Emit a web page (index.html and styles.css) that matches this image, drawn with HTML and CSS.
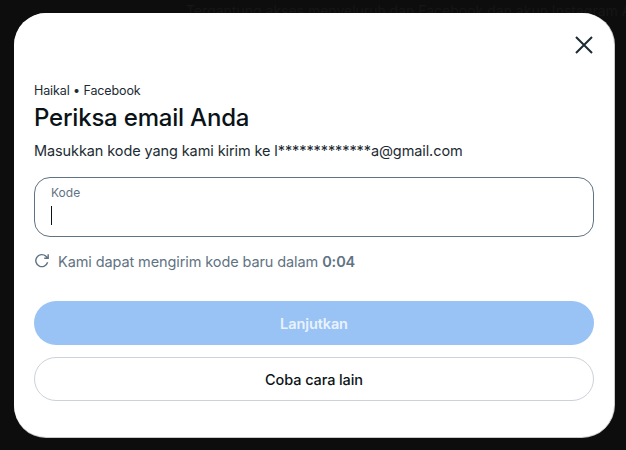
FILE: index.html
```html
<!DOCTYPE html>
<html lang="id">
<head>
  <meta charset="UTF-8">
  <title>Periksa email Anda</title>
  <meta name="viewport" content="width=device-width, initial-scale=1">
  <link rel="stylesheet" href="styles.css">
</head>
<body>
  <div class="backdrop-text">Tergantung akses menyeluruh dan Facebook dan akun Instagram Anda</div>

  <div class="modal">
    <div class="modal-top">
      <button class="close-button" aria-label="Tutup">
        <svg width="18" height="18" viewBox="0 0 18 18"><path d="M1 1 L17 17 M17 1 L1 17" fill="none" stroke="#1c2b33" stroke-width="2"/></svg>
      </button>
    </div>

    <div class="account">Haikal • Facebook</div>
    <h1>Periksa email Anda</h1>
    <p class="intro">Masukkan kode yang kami kirim ke l*************a@gmail.com</p>

    <div class="field">
      <div class="field-label">Kode</div>
      <div class="caret"></div>
    </div>

    <div class="resend">
      <svg width="16" height="16" viewBox="0 0 16 16"><path d="M13.6 9.2 A6 6 0 1 1 11.9 3.2 L14 5.2 M14.2 1.2 V5.3 H10.2" fill="none" stroke="#5f7383" stroke-width="1.4"/></svg>
      <span>Kami dapat mengirim kode baru dalam <strong>0:04</strong></span>
    </div>

    <button class="btn btn-primary">Lanjutkan</button>
    <button class="btn btn-outline">Coba cara lain</button>
  </div>
</body>
</html>
```

FILE: styles.css
```css
* {
  box-sizing: border-box;
}

html, body {
  height: 100%;
}

body {
  margin: 0;
  padding: 13px 12px 13px 14px;
  background: #0d0d0d;
  font-family: Inter, 'Noto Sans', sans-serif;
  color: #1c2b33;
  overflow: hidden;
  position: relative;
}

.backdrop-text {
  position: absolute;
  top: 2px;
  left: 186px;
  font-size: 14px;
  white-space: nowrap;
  color: #161616;
}

.modal {
  position: relative;
  width: 600px;
  height: 424px;
  padding: 18px 20px 0;
  background: #fff;
  border-radius: 32px;
  box-shadow: 0 1px 0 #c9c9c9, 1px 0 0 #c9c9c9;
}

.modal-top {
  display: flex;
  justify-content: flex-end;
  height: 51px;
  margin-right: -2px;
}

.close-button {
  width: 24px;
  height: 28px;
  padding: 0;
  border: none;
  background: none;
  display: flex;
  align-items: center;
  justify-content: center;
}

.account {
  font-size: 12.5px;
  line-height: 18px;
  letter-spacing: -0.1px;
}

h1 {
  margin: 3px 0 0;
  font-size: 24px;
  line-height: 30px;
  font-weight: 500;
  letter-spacing: -0.2px;
  color: #0a1317;
}

.intro {
  margin: 8px 0 0;
  font-size: 14.5px;
  line-height: 20px;
  letter-spacing: -0.1px;
}

.field {
  margin-top: 16px;
  height: 60px;
  padding: 6px 16px;
  border: 1px solid #5f7383;
  border-radius: 16px;
}

.field-label {
  font-size: 12px;
  line-height: 18px;
  color: #5f7383;
}

.caret {
  width: 1px;
  height: 19px;
  margin-top: 4px;
  background: #0a1317;
}

.resend {
  display: flex;
  align-items: center;
  gap: 8px;
  margin-top: 14px;
  height: 20px;
  font-size: 14.5px;
  color: #5f7383;
  letter-spacing: -0.1px;
}

.resend strong {
  font-weight: 600;
}

.btn {
  display: block;
  width: 100%;
  height: 44px;
  border-radius: 22px;
  font-family: inherit;
  font-size: 14.5px;
  font-weight: 500;
  letter-spacing: -0.1px;
}

.btn-primary {
  margin-top: 30px;
  border: none;
  background: #99c2f5;
  color: #e9f2fd;
  font-weight: 600;
}

.btn-outline {
  margin-top: 12px;
  border: 1px solid #cbd2d9;
  background: #fff;
  color: #0a1317;
}
```
